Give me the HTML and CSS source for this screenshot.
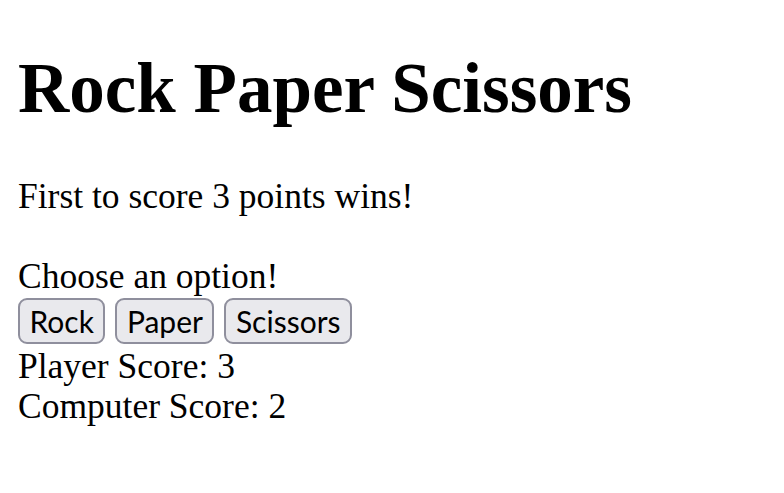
FILE: index.html
```html
<!DOCTYPE html>
<html>
<head>
<meta charset="utf-8">
<title>Rock Paper Scissors</title>
<link rel="stylesheet" href="styles.css">
</head>
<body>
<h1 class="title">Rock Paper Scissors</h1>
<p class="intro">First to score 3 points wins!</p>
<div class="prompt">Choose an option!</div>
<div class="choices">
  <button class="btn">Rock</button>
  <button class="btn">Paper</button>
  <button class="btn">Scissors</button>
</div>
<div class="score">Player Score: 3</div>
<div class="score">Computer Score: 2</div>
</body>
</html>
```
FILE: styles.css
```css
html, body {
  margin: 0;
  padding: 0;
}
body {
  padding: 0 18px;
  font-family: "Liberation Serif", "Times New Roman", serif;
  font-size: 35.5px;
  line-height: 40px;
  color: #000;
  background: #fff;
}
.title {
  font-size: 71px;
  line-height: 80px;
  font-weight: bold;
  margin: 48px 0 0;
}
.intro {
  margin: 48px 0 40px;
}
.choices {
  display: flex;
  gap: 10px;
  margin: 1.5px 0 2.5px;
}
.btn {
  font-family: Lato, "Noto Sans", sans-serif;
  font-size: 30px;
  line-height: 38px;
  color: #000;
  background: #e9e9ed;
  border: 2px solid #8f8f9d;
  border-radius: 9px;
  padding: 0 9.5px;
  height: 46px;
}
.score {
  margin: 0;
}
```
